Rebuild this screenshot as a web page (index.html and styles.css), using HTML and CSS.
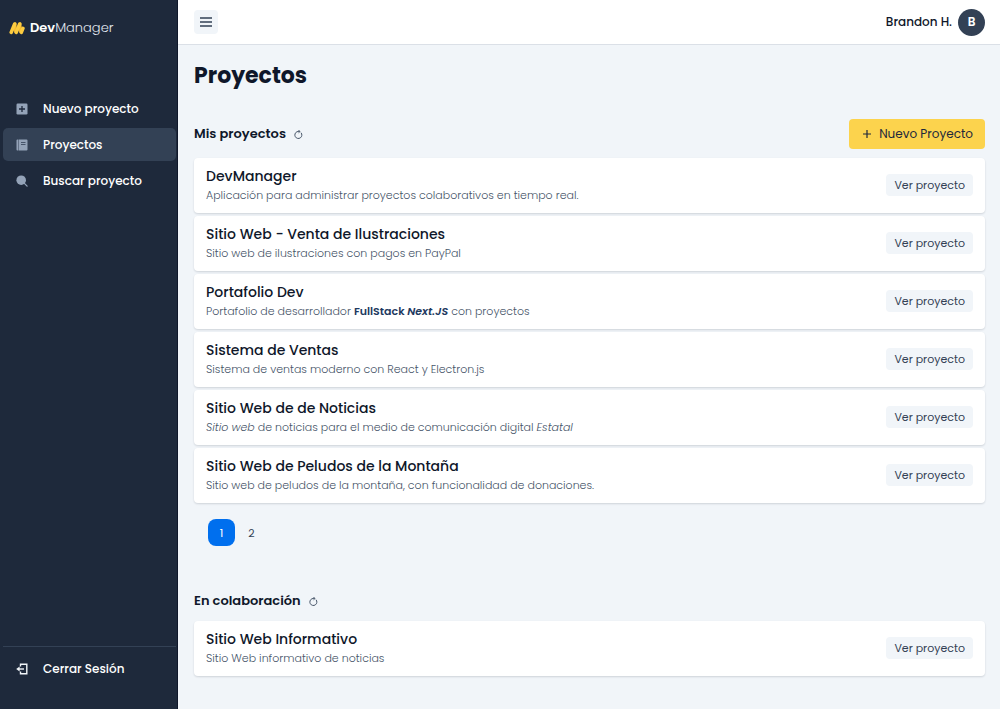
FILE: index.html
```html
<!DOCTYPE html>
<html lang="es">
<head>
<meta charset="utf-8">
<meta name="viewport" content="width=device-width, initial-scale=1">
<title>DevManager - Proyectos</title>
<link rel="stylesheet" href="styles.css">
</head>
<body>
<div class="app">
  <aside class="sidebar">
    <a class="brand" href="#">
      <svg class="brand-mark" viewBox="0 0 16 14" aria-hidden="true">
        <g fill="none" stroke-linecap="round" stroke-linejoin="round">
          <path d="M5.9 3 6.6 10.5M10.9 3 11.6 10.5" stroke="#f5b731" stroke-width="3"/>
          <path d="M2.2 11.4 5.7 3M7.2 11.4 10.7 3" stroke="#fccb3f" stroke-width="3.6"/>
          <path d="M12.3 11.4 13.9 7.4" stroke="#fccb3f" stroke-width="3.6"/>
        </g>
      </svg>
      <span class="brand-name"><strong>Dev</strong>Manager</span>
    </a>
    <nav class="menu" aria-label="Principal">
      <a class="menu-item" href="#">
        <svg class="icon" viewBox="0 0 12 12" aria-hidden="true"><rect x=".5" y=".5" width="11" height="11" rx="1.2" fill="#94a3b8"/><path d="M6 3v6M3 6h6" stroke="#1e293b" stroke-width="1.3"/></svg>
        Nuevo proyecto
      </a>
      <a class="menu-item active" href="#" aria-current="page">
        <svg class="icon" viewBox="0 0 12 12" aria-hidden="true"><path d="M.5 1.5a1 1 0 0 1 1-1h1v11h-1a1 1 0 0 1-1-1zM3 .5h7.5a1 1 0 0 1 1 1v9a1 1 0 0 1-1 1H3z" fill="#94a3b8"/><path d="M5 3.5h4.5M5 5.5h4.5" stroke="#334155" stroke-width=".8"/></svg>
        Proyectos
      </a>
      <a class="menu-item" href="#">
        <svg class="icon" viewBox="0 0 12 12" aria-hidden="true"><circle cx="5.2" cy="5.2" r="4.8" fill="#94a3b8"/><path d="m8.4 8.4 2.7 2.7" stroke="#94a3b8" stroke-width="1.3" stroke-linecap="round"/></svg>
        Buscar proyecto
      </a>
    </nav>
    <div class="session">
      <button class="menu-item" type="button">
        <svg class="icon" viewBox="0 0 12 12" aria-hidden="true" fill="none" stroke="#f1f5f9" stroke-width="1.4"><path d="M4.5 3.4V1.2h6.3v9.6H4.5V8.6"/><path d="M8 6H2"/><path d="M.2 6 3.6 3.4v5.2z" fill="#f1f5f9" stroke="none"/></svg>
        Cerrar Sesión
      </button>
    </div>
  </aside>

  <div class="content">
    <header class="topbar">
      <button class="toggle" type="button" aria-label="Abrir menú">
        <svg viewBox="0 0 12 10" aria-hidden="true"><path d="M0 1h12M0 5h12M0 9h12" stroke="#334155" stroke-width="1.4"/></svg>
      </button>
      <div class="user"><span>Brandon H.</span><span class="avatar">B</span></div>
    </header>

    <main class="page">
      <h1>Proyectos</h1>

      <section class="group">
        <div class="group-head">
          <h2>Mis proyectos</h2>
          <button class="refresh" type="button" aria-label="Actualizar mis proyectos"><svg viewBox="0 0 9 9" aria-hidden="true"><path d="M7 2.7A3.5 3.5 0 1 1 2.9 1.8Q4 1.3 5.6 1.5"/><path d="M4.5 0 6 1.5 4.5 2.8"/></svg></button>
          <button class="create" type="button"><svg viewBox="0 0 8 8" aria-hidden="true"><path d="M4 0v8M0 4h8"/></svg>Nuevo Proyecto</button>
        </div>
        <ul class="list">
          <li class="card"><div><h3>DevManager</h3><p>Aplicación para administrar proyectos colaborativos en tiempo real.</p></div><a class="view" href="#">Ver proyecto</a></li>
          <li class="card"><div><h3>Sitio Web - Venta de Ilustraciones</h3><p>Sitio web de ilustraciones con pagos en PayPal</p></div><a class="view" href="#">Ver proyecto</a></li>
          <li class="card"><div><h3>Portafolio Dev</h3><p>Portafolio de desarrollador <strong>FullStack <em>Next.JS</em></strong> con proyectos</p></div><a class="view" href="#">Ver proyecto</a></li>
          <li class="card"><div><h3>Sistema de Ventas</h3><p>Sistema de ventas moderno con React y Electron.js</p></div><a class="view" href="#">Ver proyecto</a></li>
          <li class="card"><div><h3>Sitio Web de de Noticias</h3><p><em>Sitio web</em> de noticias para el medio de comunicación digital <em>Estatal</em></p></div><a class="view" href="#">Ver proyecto</a></li>
          <li class="card"><div><h3>Sitio Web de Peludos de la Montaña</h3><p>Sitio web de peludos de la montaña, con funcionalidad de donaciones.</p></div><a class="view" href="#">Ver proyecto</a></li>
        </ul>
        <nav class="pager" aria-label="Paginación">
          <button class="page-link current" type="button" aria-current="page">1</button>
          <button class="page-link" type="button">2</button>
        </nav>
      </section>

      <section class="group">
        <div class="group-head">
          <h2>En colaboración</h2>
          <button class="refresh" type="button" aria-label="Actualizar colaboraciones"><svg viewBox="0 0 9 9" aria-hidden="true"><path d="M7 2.7A3.5 3.5 0 1 1 2.9 1.8Q4 1.3 5.6 1.5"/><path d="M4.5 0 6 1.5 4.5 2.8"/></svg></button>
        </div>
        <ul class="list">
          <li class="card"><div><h3>Sitio Web Informativo</h3><p>Sitio Web informativo de noticias</p></div><a class="view" href="#">Ver proyecto</a></li>
        </ul>
      </section>
    </main>
  </div>
</div>
</body>
</html>
```
FILE: styles.css
```css
* { box-sizing: border-box; }

body {
  margin: 0;
  font-family: Poppins, Inter, "Open Sans", sans-serif;
  font-size: 12px;
  line-height: 20px;
  color: #0f172a;
  background: #f1f5f9;
}

h1, h2, h3, p, ul { margin: 0; padding: 0; }
button { font: inherit; color: inherit; border: 0; padding: 0; background: none; cursor: pointer; }
a { color: inherit; text-decoration: none; }
svg { display: block; flex: none; }

.app { display: flex; min-height: 100vh; }

.sidebar {
  display: flex;
  flex-direction: column;
  flex: none;
  width: 178px;
  background: #1e293b;
  border-right: 1px solid #0f172a;
  color: #fff;
}

.brand { display: flex; align-items: center; gap: 5px; padding: 18px 9px; }
.brand-mark { width: 16px; height: 14px; }
.brand-name { font-size: 13px; font-weight: 300; color: #e2e8f0; }
.brand-name strong { font-weight: 600; color: #fff; }

.menu { display: flex; flex-direction: column; gap: 3px; padding: 36px 1px 0 3px; }
.menu-item {
  display: flex;
  align-items: center;
  gap: 15px;
  width: 100%;
  padding: 6px 13px;
  line-height: 21px;
  border-radius: 5px;
  font-weight: 500;
  text-align: left;
}
.menu-item.active { background: #334155; }
.icon { width: 12px; height: 12px; }

.session { margin: auto 1px 24px 3px; padding-top: 5px; border-top: 1px solid #334155; }

.content { flex: 1; min-width: 0; }

.topbar {
  display: flex;
  align-items: center;
  justify-content: space-between;
  height: 45px;
  padding: 0 15px 0 16px;
  background: #fff;
  border-bottom: 1px solid #dbe0e7;
}
.toggle { display: grid; place-items: center; width: 24px; height: 24px; border-radius: 4px; background: #f1f5f9; }
.toggle svg { width: 12px; height: 10px; }
.user { display: flex; align-items: center; gap: 6px; font-weight: 500; }
.avatar {
  display: grid;
  place-items: center;
  width: 27px;
  height: 27px;
  border-radius: 50%;
  background: #334155;
  color: #fff;
  font-weight: 600;
}

.page { padding: 15px 15px 15px 16px; }
h1 { font-size: 22px; line-height: 32px; font-weight: 700; }

.group { margin-top: 27px; }
.group + .group { margin-top: 44px; }
.group-head { display: flex; align-items: center; min-height: 22px; }
h2 { font-size: 13px; font-weight: 600; }
.refresh { padding: 3px; margin-left: 5px; }
.refresh svg { width: 9px; height: 9px; fill: none; stroke: #475569; stroke-width: 1; }
.create {
  display: flex;
  align-items: center;
  gap: 8px;
  margin-left: auto;
  padding: 5px 12px 5px 14px;
  border-radius: 4px;
  background: #fcd34d;
  color: #1e293b;
}
.create svg { width: 8px; height: 8px; stroke: #1e293b; stroke-width: 1.2; }

.list { display: grid; gap: 3px; margin-top: 9px; list-style: none; }
.card {
  display: flex;
  align-items: center;
  justify-content: space-between;
  padding: 8px 12px 9px;
  border-radius: 4px;
  background: #fff;
  box-shadow: 0 1px 2px #0f172a26;
}
h3 { font-size: 14px; line-height: 20px; font-weight: 500; }
.card p { font-size: 11px; line-height: 18px; color: #475569; font-weight: 300; }
.card p strong { color: #1e3a5f; font-weight: 600; }
.view {
  padding: 2px 8px;
  border-radius: 4px;
  background: #f1f5f9;
  color: #334155;
  font-size: 11px;
  line-height: 18px;
}

.pager { display: flex; gap: 3px; padding: 16px 14px 0; }
.page-link { width: 27px; height: 27px; border-radius: 8px; font-size: 11px; color: #334155; }
.page-link.current { background: #006fee; color: #fff; }
```
